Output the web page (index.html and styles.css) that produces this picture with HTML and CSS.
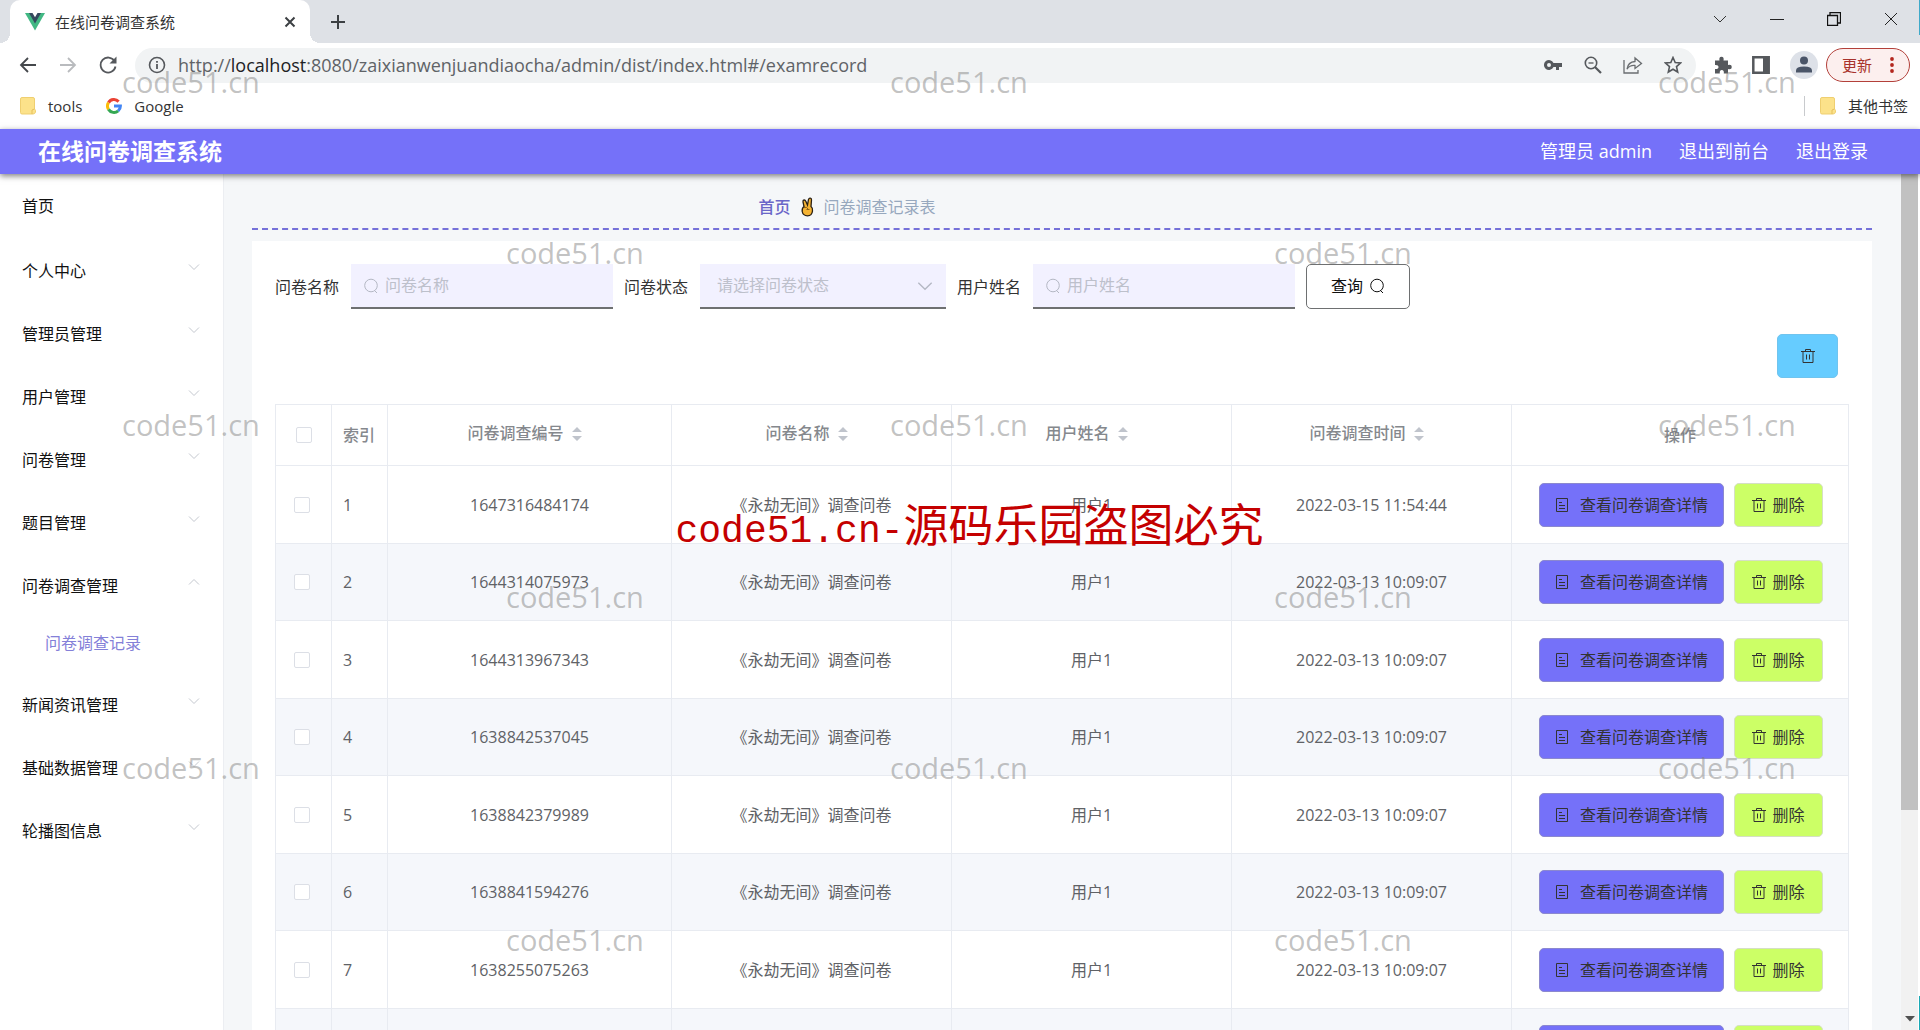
FILE: index.html
```html
<!DOCTYPE html>
<html lang="zh-CN">
<head>
<meta charset="utf-8">
<title>在线问卷调查系统</title>
<link rel="stylesheet" href="styles.css">
</head>
<body>
<svg class="defs" aria-hidden="true">
  <symbol id="i-trash" viewBox="0 0 14 14"><path d="M0 2.500h14M4.500 2.500V.5h5v2M2 2.500V13.500H12V2.500M5.500 5.500v5M8.500 5.500v5" fill="none" stroke="currentColor"/></symbol>
  <symbol id="i-doc" viewBox="0 0 14 14"><path d="M1.500 .5h11v13h-11zM4 4.500h3M4 7.500h6M4 10.500h6" fill="none" stroke="currentColor"/></symbol>
  <symbol id="i-search" viewBox="0 0 16 16"><circle cx="8" cy="7.500" r="6.300" fill="none" stroke="currentColor"/><path d="M11.500 12.500l2.500 2.500" stroke="currentColor"/></symbol>
  <symbol id="i-down" viewBox="0 0 12 12"><path d="M1 3.500l5 5 5-5" fill="none" stroke="currentColor"/></symbol>
  <symbol id="i-sort" viewBox="0 0 10 16"><path d="M5 1l5 5H0zM5 15L0 10h10z" fill="currentColor"/></symbol>
  <symbol id="i-folder" viewBox="0 0 16 18"><path d="M2 .5h11q1.500 0 1.500 1.500v10q1.500 1 1 3-.5 2-2.500 2H2q-1.500 0-1.500-1.500V2Q.5.500 2 .5z" fill="#fce28a" stroke="#efcf70"/><path d="M12 17v-4l2.500-1" fill="none" stroke="#e5c05c"/></symbol>
</svg>

<div class="browser">
  <div class="tabstrip">
    <div class="tab">
      <svg class="vue" viewBox="0 0 20 18"><path d="M0 0h20L10 17.500z" fill="#41b883"/><path d="M4 0h12l-6 10.500z" fill="#34495e"/><path d="M7.500 0h5L10 4.300z" fill="#fff"/></svg>
      <span class="tab-title">在线问卷调查系统</span>
      <button class="plain" aria-label="关闭标签页"><svg width="12" height="12" viewBox="0 0 12 12"><path d="M1.500 1.500l9 9M10.500 1.500l-9 9" stroke="#3c4043" stroke-width="2"/></svg></button>
    </div>
    <button class="plain" aria-label="新标签页"><svg width="16" height="16" viewBox="0 0 16 16"><path d="M8 1v14M1 8h14" stroke="#3c4043" stroke-width="2"/></svg></button>
    <div class="window-btns">
      <button class="plain" aria-label="搜索标签页"><svg width="14" height="14" viewBox="0 0 14 14"><path d="M1 4l6 6 6-6" fill="none" stroke="#333"/></svg></button>
      <button class="plain" aria-label="最小化"><svg width="14" height="14" viewBox="0 0 14 14"><path d="M0 7.500h14" stroke="#222"/></svg></button>
      <button class="plain" aria-label="还原"><svg width="14" height="14" viewBox="0 0 14 14"><path d="M.5 3.500h10v10H.5zM3 3V.5h10.500V11H11" fill="none" stroke="#111" stroke-width="1.300"/></svg></button>
      <button class="plain" aria-label="关闭"><svg width="14" height="14" viewBox="0 0 14 14"><path d="M1 1l12 12M13 1L1 13" stroke="#222"/></svg></button>
    </div>
  </div>
  <div class="toolbar">
    <button class="plain" aria-label="后退"><svg width="18" height="18" viewBox="0 0 18 18"><path d="M17 9H2M9 2L2 9l7 7" fill="none" stroke="#45484c" stroke-width="1.800"/></svg></button>
    <button class="plain" aria-label="前进"><svg width="18" height="18" viewBox="0 0 18 18"><path d="M1 9h15M9 2l7 7-7 7" fill="none" stroke="#b9bbbe" stroke-width="1.800"/></svg></button>
    <button class="plain" aria-label="刷新"><svg width="18" height="18" viewBox="0 0 18 18"><path d="M15.500 5A7.500 7.500 0 1 0 16.500 10.500" fill="none" stroke="#55585c" stroke-width="1.800"/><path d="M17.500 .5v7h-7z" fill="#55585c"/></svg></button>
    <div class="omnibox">
      <svg width="18" height="18" viewBox="0 0 18 18"><circle cx="9" cy="9" r="7.500" fill="none" stroke="#55585c" stroke-width="1.600"/><path d="M9 8v5M9 5v1.800" stroke="#55585c" stroke-width="1.800"/></svg>
      <span class="url">http://<b>localhost</b>:8080/zaixianwenjuandiaocha/admin/dist/index.html#/examrecord</span>
      <div class="omni-icons">
        <svg width="20" height="18" viewBox="0 0 20 18"><path d="M10.500 7a5 5 0 1 0 0 4H13v3h3v-3h3V7zM6 11a2 2 0 1 1 0-4 2 2 0 0 1 0 4z" fill="#55585c" fill-rule="evenodd"/></svg>
        <svg width="18" height="18" viewBox="0 0 18 18"><circle cx="7" cy="7" r="5.700" fill="none" stroke="#55585c" stroke-width="1.600"/><path d="M11 11l6 6" stroke="#55585c" stroke-width="2.200"/><path d="M4.500 7h5" stroke="#55585c" stroke-width="1.300"/></svg>
        <svg width="20" height="18" viewBox="0 0 20 18"><path d="M1 4v13h14v-3" fill="none" stroke="#6a6d70" stroke-width="1.300"/><path d="M4 13q1-7 8-7.500V2l6.500 5.500L12 12.500V9.500q-5-.5-8 3.500z" fill="none" stroke="#6a6d70" stroke-width="1.300"/></svg>
        <svg width="18" height="18" viewBox="0 0 18 18"><path d="M9 1.500l2.200 5 5.300.5-4 3.600 1.200 5.400L9 13.200 4.300 16l1.200-5.400L1.500 7l5.300-.5z" fill="none" stroke="#55585c" stroke-width="1.600"/></svg>
      </div>
    </div>
    <div class="ext">
      <svg width="18" height="18" viewBox="0 0 18 18"><path d="M1 4.500h4.500q-.8-3.800 2-3.800t2 3.800H14V9q3.800-.8 3.800 2T14 13v4.500H9.800q.5-3.500-2-3.500t-2 3.500H1V13q3.500.3 3.500-2T1 9z" fill="#55585c"/></svg>
      <svg width="18" height="18" viewBox="0 0 18 18"><path d="M1.300 1.300h15.400v15.400H1.300z" fill="none" stroke="#55585c" stroke-width="2.500"/><path d="M11 1h6v16h-6z" fill="#55585c"/></svg>
      <svg width="28" height="28" viewBox="0 0 28 28"><circle cx="14" cy="14" r="14" fill="#dde1e8"/><circle cx="14" cy="9.500" r="4" fill="#4a5568"/><path d="M6 21.500v-2q0-4 8-4t8 4v2z" fill="#4a5568"/></svg>
      <button class="update">更新<svg width="4" height="16" viewBox="0 0 4 16"><g fill="#b3261e"><circle cx="2" cy="2" r="1.900"/><circle cx="2" cy="8" r="1.900"/><circle cx="2" cy="14" r="1.900"/></g></svg></button>
    </div>
  </div>
  <div class="bookmarks">
    <a href="#tools"><svg width="16" height="18"><use href="#i-folder"/></svg>tools</a>
    <a href="#google"><svg width="16" height="16" viewBox="0 0 16 16" fill="none" stroke-width="3"><path d="M2.500 4.600A6.400 6.400 0 0 1 12.600 3.600" stroke="#ea4335"/><path d="M2.500 11.400a6.400 6.400 0 0 1 0-6.800" stroke="#fbbc05"/><path d="M12.200 12.800A6.400 6.400 0 0 1 2.500 11.400" stroke="#34a853"/><path d="M8 8h6.400q0 3-2.200 4.800" stroke="#4285f4"/></svg>Google</a>
    <a href="#other" class="other"><svg width="16" height="18"><use href="#i-folder"/></svg>其他书签</a>
  </div>
</div>

<header class="app-header">
  <h1>在线问卷调查系统</h1>
  <nav><span>管理员 admin</span><a href="#front">退出到前台</a><a href="#logout">退出登录</a></nav>
</header>

<div class="app-body">
  <nav class="sidebar">
    <a href="#home" class="item">首页</a>
    <a href="#center" class="item">个人中心<svg><use href="#i-down"/></svg></a>
    <a href="#admins" class="item">管理员管理<svg><use href="#i-down"/></svg></a>
    <a href="#users" class="item">用户管理<svg><use href="#i-down"/></svg></a>
    <a href="#papers" class="item">问卷管理<svg><use href="#i-down"/></svg></a>
    <a href="#questions" class="item">题目管理<svg><use href="#i-down"/></svg></a>
    <a href="#records" class="item open">问卷调查管理<svg><use href="#i-down"/></svg></a>
    <a href="#record-list" class="sub">问卷调查记录</a>
    <a href="#news" class="item">新闻资讯管理<svg><use href="#i-down"/></svg></a>
    <a href="#base" class="item">基础数据管理<svg><use href="#i-down"/></svg></a>
    <a href="#banner" class="item">轮播图信息<svg><use href="#i-down"/></svg></a>
  </nav>

  <main>
    <div class="crumbs">
      <a href="#home">首页</a>
      <svg width="13" height="20" viewBox="0 0 13 20"><path d="M3 9.500L2 5q-.2-1.800 1-2t1.800 1.200L6.500 8 7.500 2.500Q8 1 9.300 1.200T10.500 3L10 9.500q2 1.500 1.500 4.500-.5 4.800-5 4.800T1.200 14.500Q.8 11 3 9.500z" fill="#f5b333" stroke="#2b2013" stroke-width="1.300"/><path d="M3 10.500q3-1 4 1.500M5.500 12.500h3" fill="none" stroke="#8a5f18"/></svg>
      <span>问卷调查记录表</span>
    </div>
    <section class="card">
      <form class="filters">
        <label for="f-name">问卷名称</label>
        <div class="field"><svg><use href="#i-search"/></svg><input id="f-name" type="text" placeholder="问卷名称"></div>
        <label for="f-state">问卷状态</label>
        <div class="field select"><select id="f-state"><option>请选择问卷状态</option></select><svg><use href="#i-down"/></svg></div>
        <label for="f-user">用户姓名</label>
        <div class="field"><svg><use href="#i-search"/></svg><input id="f-user" type="text" placeholder="用户姓名"></div>
        <button type="button" class="query">查询<svg><use href="#i-search"/></svg></button>
      </form>
      <div class="actions"><button class="btn bulk" aria-label="批量删除"><svg><use href="#i-trash"/></svg></button></div>
      <table>
        <colgroup><col class="c-sm"><col class="c-sm"><col class="c-id"><col class="c-md"><col class="c-md"><col class="c-md"><col></colgroup>
        <thead><tr>
          <th><input type="checkbox" aria-label="全选"></th>
          <th class="left">索引</th>
          <th class="sortable">问卷调查编号<svg><use href="#i-sort"/></svg></th>
          <th class="sortable">问卷名称<svg><use href="#i-sort"/></svg></th>
          <th class="sortable">用户姓名<svg><use href="#i-sort"/></svg></th>
          <th class="sortable">问卷调查时间<svg><use href="#i-sort"/></svg></th>
          <th>操作</th>
        </tr></thead>
        <tbody id="rows"></tbody>
      </table>
    </section>
  </main>
  <div class="scrollbar"><div class="thumb"></div><svg width="10" height="6" viewBox="0 0 10 6"><path d="M0 0h10L5 5.500z" fill="#505050"/></svg></div>
</div>

<div class="marks" aria-hidden="true">
  <div><span>code51.cn</span><span>code51.cn</span><span>code51.cn</span></div>
  <div><span>code51.cn</span><span>code51.cn</span></div>
  <div><span>code51.cn</span><span>code51.cn</span><span>code51.cn</span></div>
  <div><span>code51.cn</span><span>code51.cn</span></div>
  <div><span>code51.cn</span><span>code51.cn</span><span>code51.cn</span></div>
  <div><span>code51.cn</span><span>code51.cn</span></div>
</div>
<div class="notice"><span>code51.cn-</span>源码乐园盗图必究</div>
<script src="rows.js"></script>
</body>
</html>
```
FILE: styles.css
```css
* { box-sizing: border-box; }
body {
  margin: 0;
  height: 100vh;
  display: flex;
  flex-direction: column;
  overflow: hidden;
  position: relative;
  background: #fff;
  font: 16px/24px "Open Sans", "Noto Sans CJK SC", sans-serif;
  color: #333;
}
a { color: inherit; text-decoration: none; }
button, input, select { font: inherit; color: inherit; }
svg { flex: none; }
.defs { position: absolute; width: 0; height: 0; }
.plain { display: flex; padding: 0; border: 0; background: none; }

/* browser chrome */
.browser { flex: none; }
.tabstrip { display: flex; align-items: center; gap: 20px; height: 43px; padding-left: 10px; background: linear-gradient(#3fa9c9, #3fa9c9) right top / 1px 35px no-repeat #dee1e6; }
.tab { position: relative; display: flex; align-items: center; gap: 10px; width: 300px; height: 43px; padding: 0 14px 0 15px; border-radius: 10px 10px 0 0; background: #fff; }
.tab::before, .tab::after { content: ""; position: absolute; bottom: 0; width: 10px; height: 10px; }
.tab::before { left: -10px; background: radial-gradient(circle at 0 0, transparent 10px, #fff 10px); }
.tab::after { right: -10px; background: radial-gradient(circle at 100% 0, transparent 10px, #fff 10px); }
.vue { width: 20px; height: 18px; }
.tab-title { flex: 1; font-size: 15px; }
.window-btns { display: flex; gap: 43px; margin-left: auto; padding: 0 22px 6px 0; }
.toolbar { display: flex; align-items: center; gap: 22px; height: 44px; padding: 0 10px 0 19px; }
.omnibox { flex: 1; display: flex; align-items: center; gap: 12px; height: 35px; margin-left: -4px; padding: 0 14px 0 13px; border-radius: 18px; background: #f1f3f4; }
.url { flex: 1; font-size: 18px; color: #606367; }
.url b { font-weight: 400; color: #202124; }
.omni-icons { display: flex; gap: 21px; }
.ext { display: flex; align-items: center; gap: 20px; margin-left: -4px; }
.update { display: flex; align-items: center; gap: 18px; height: 34px; margin-left: -12px; padding: 0 15px; border: 1px solid #b3403a; border-radius: 17px; background: #fcefee; color: #a8322b; font-size: 15px; }
.bookmarks { display: flex; align-items: center; gap: 24px; height: 42px; padding: 0 12px 4px 20px; font-size: 15px; }
.bookmarks a { display: flex; align-items: center; gap: 12px; }
.bookmarks .other { margin-left: auto; padding-left: 15px; border-left: 1px solid #c8cacd; line-height: 20px; }

/* app header */
.app-header { flex: none; display: flex; align-items: center; justify-content: space-between; height: 45px; padding: 0 52px 2px 38px; background: #7571f9; color: #fff; box-shadow: 0 2px 6px rgba(0, 0, 0, .5); z-index: 1; }
.app-header h1 { margin: 0; font-size: 23px; font-weight: 700; }
.app-header nav { display: flex; gap: 27px; font-size: 18px; }

.app-body { flex: 1; min-height: 0; display: flex; padding-right: 2px; background: linear-gradient(#1ba9b5, #1ba9b5) right bottom / 1px 34px no-repeat; }
.sidebar { flex: none; width: 224px; border-right: 1px solid #eceef2; color: #111; }
.item { display: flex; align-items: center; justify-content: space-between; height: 63px; padding: 0 23px 0 22px; }
.item:first-child { margin-bottom: 2px; }
.item svg { width: 12px; height: 12px; margin-bottom: 8px; color: #c4c8cf; }
.open svg { transform: rotate(180deg); }
.sub { display: flex; align-items: center; height: 56px; padding: 0 0 4px 45px; color: #8480d8; }

main { flex: 1; min-width: 0; padding: 0 29px 0 28px; background: #f5f7f9; overflow: hidden; }
.crumbs { display: flex; align-items: center; justify-content: center; gap: 10px; height: 56px; padding: 12px 430px 0 0; border-bottom: 2px dashed #7571d9; color: #97a8be; }
.crumbs a { color: #6a66c8; font-weight: 500; }
.card { margin-top: 11px; padding: 23px 23px 0; background: #fff; }

.filters { display: flex; align-items: center; gap: 11px; height: 45px; }
.filters label { width: 65px; }
.field { display: flex; align-items: center; gap: 6px; width: 262px; height: 45px; padding-left: 12px; border-bottom: 2px solid #6e7071; background: #f2f1ff; color: #b4b8c4; }
.field svg { width: 16px; height: 16px; }
.field input { flex: 1; min-width: 0; padding: 0 0 2px; border: 0; outline: 0; background: none; }
.field input::placeholder { color: #bdc0cb; }
.select { width: 246px; padding: 0 13px 0 17px; }
.field select { flex: 1; padding: 0 0 2px; border: 0; outline: 0; background: none; appearance: none; color: #bdc0cb; }
.query { display: flex; align-items: center; justify-content: center; gap: 6px; width: 104px; height: 45px; padding: 0 0 2px; border: 1px solid #6e7071; border-radius: 5px; background: #fff; color: #111; }
.query svg { width: 16px; height: 16px; }
.actions { display: flex; justify-content: flex-end; padding: 25px 11px 26px 0; }

.btn { display: inline-flex; align-items: center; justify-content: center; height: 44px; padding: 0; border: 1px solid #d5dfc4; border-radius: 5px; color: #333; vertical-align: middle; }
.btn svg { width: 14px; height: 14px; }
.bulk { width: 61px; background: #66ccff; border-color: #70c4ee; }
.view { width: 185px; gap: 11px; margin: 0 10px 0 2px; background: #7571f9; border-color: #8b88cf; }
.del { width: 89px; gap: 6px; background: #ccff66; }

table { width: 100%; table-layout: fixed; border-collapse: collapse; color: #606266; }
.c-sm { width: 56px; }
.c-id { width: 284px; }
.c-md { width: 280px; }
th, td { padding: 0; border: 1px solid #e8ebf1; text-align: center; }
th { height: 61px; color: #85888d; font-weight: 500; }
th.sortable { padding: 0 10px 4px 0; }
th svg { width: 10px; height: 16px; margin-left: 8px; vertical-align: -3px; color: #c0c4cc; }
td { height: 78px; }
td:first-child { padding-right: 4px; }
tbody tr:nth-child(even) { background: #f5f7fb; }
tbody tr:nth-child(even) td { height: 77px; }
th.left, td.left { padding-left: 11px; text-align: left; }
input[type="checkbox"] { display: block; width: 16px; height: 16px; margin: 0 auto; appearance: none; border: 1px solid #dcdfe6; border-radius: 2px; background: #fff; }

.scrollbar { flex: none; display: flex; flex-direction: column; justify-content: space-between; align-items: center; width: 17px; padding-bottom: 8px; background: #f1f1f1; }
.thumb { width: 17px; height: 75%; background: #c1c1c1; }

/* watermark layer over the whole window */
.marks { position: absolute; inset: -4px 0 4px; display: grid; grid-template-rows: repeat(6, 1fr); pointer-events: none; z-index: 2; color: rgba(120, 120, 120, .45); font-size: 29px; }
.marks div { display: grid; grid-template-columns: 40vw 40vw 1fr; align-items: center; margin-left: 122px; overflow: hidden; }
.marks div:nth-child(even) { margin-left: 506px; }
.notice { position: absolute; left: 0; right: 0; top: 49vh; padding-left: 19px; display: flex; align-items: baseline; justify-content: center; z-index: 3; color: #c40000; font-size: 45px; line-height: 40px; pointer-events: none; }
.notice span { font-family: "Liberation Mono", monospace; font-size: 38px; }
```
FILE: rows.js
```javascript
const records = [
  ["1647316484174", "2022-03-15 11:54:44"],
  ["1644314075973", "2022-03-13 10:09:07"],
  ["1644313967343", "2022-03-13 10:09:07"],
  ["1638842537045", "2022-03-13 10:09:07"],
  ["1638842379989", "2022-03-13 10:09:07"],
  ["1638841594276", "2022-03-13 10:09:07"],
  ["1638255075263", "2022-03-13 10:09:07"],
  ["", ""]
];

document.getElementById("rows").innerHTML = records.map(([id, time], i) => `
  <tr>
    <td><input type="checkbox" aria-label="选择第${i + 1}行"></td>
    <td class="left">${id && i + 1}</td>
    <td>${id}</td>
    <td>${id && "《永劫无间》调查问卷"}</td>
    <td>${id && "用户1"}</td>
    <td>${time}</td>
    <td><button class="btn view"><svg><use href="#i-doc"/></svg>查看问卷调查详情</button><button class="btn del"><svg><use href="#i-trash"/></svg>删除</button></td>
  </tr>`).join("");
```
